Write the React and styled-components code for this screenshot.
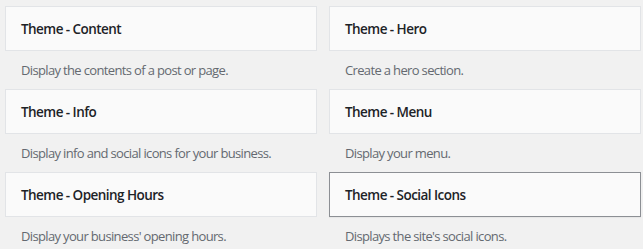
import React from "react";
import styled, { createGlobalStyle } from "styled-components";

const Global = createGlobalStyle`
  html, body { margin: 0; padding: 0; background: #f1f1f1; }
  body { font-family: "Open Sans", "Noto Sans", sans-serif; }
`;

const Grid = styled.div`
  display: grid;
  grid-template-columns: 312px 312px;
  column-gap: 12px;
  padding: 6px 0 0 5px;
`;

const Widget = styled.div`
  display: flex;
  flex-direction: column;
`;

const Card = styled.div`
  box-sizing: border-box;
  height: 45px;
  display: flex;
  align-items: center;
  padding-left: 15px;
  background: #fafafa;
  border: 1px solid ${(p) => (p.$active ? "#8c8f94" : "#e2e4e7")};
  box-shadow: ${(p) => (p.$active ? "0 1px 1px rgba(0,0,0,0.04)" : "none")};
`;

const Title = styled.h3`
  margin: 0;
  font-size: 13.5px;
  font-weight: 550;
  letter-spacing: -0.55px;
  color: #1d2327;
`;

const Desc = styled.p`
  margin: 0;
  height: 38px;
  line-height: 38px;
  padding-left: 16px;
  font-size: 13px;
  letter-spacing: -0.65px;
  color: #646970;
`;

const items = [
  ["Theme - Content", "Display the contents of a post or page."],
  ["Theme - Hero", "Create a hero section."],
  ["Theme - Info", "Display info and social icons for your business."],
  ["Theme - Menu", "Display your menu."],
  ["Theme - Opening Hours", "Display your business' opening hours."],
  ["Theme - Social Icons", "Displays the site's social icons.", true],
];

export default function App() {
  return (
    <>
      <Global />
      <Grid>
        {items.map(([t, d, a]) => (
          <Widget key={t}>
            <Card $active={a}>
              <Title>{t}</Title>
            </Card>
            <Desc>{d}</Desc>
          </Widget>
        ))}
      </Grid>
    </>
  );
}
